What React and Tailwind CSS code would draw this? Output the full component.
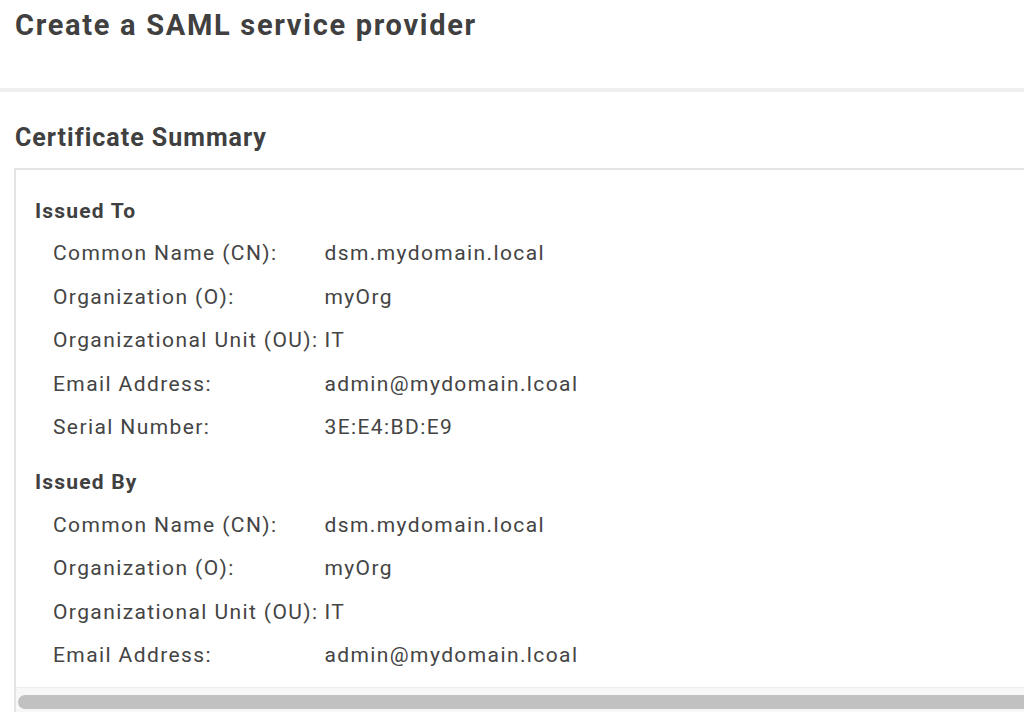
import React from 'react';

const issuedTo = [
  ['Common Name (CN):', 'dsm.mydomain.local'],
  ['Organization (O):', 'myOrg'],
  ['Organizational Unit (OU):', 'IT'],
  ['Email Address:', 'admin@mydomain.lcoal'],
  ['Serial Number:', '3E:E4:BD:E9'],
];

const issuedBy = [
  ['Common Name (CN):', 'dsm.mydomain.local'],
  ['Organization (O):', 'myOrg'],
  ['Organizational Unit (OU):', 'IT'],
  ['Email Address:', 'admin@mydomain.lcoal'],
];

const Section = ({ title, rows, className = '' }) => (
  <div className={className}>
    <div className="h-[41px] flex items-center text-[21px] font-bold tracking-[1.2px] text-[#404040]">{title}</div>
    <div className="grid grid-cols-[auto_1fr] pl-[18px] text-[21px] tracking-[1.4px] text-[#444]">
      {rows.map(([label, value]) => (
        <React.Fragment key={label + value}>
          <div className="h-[43.5px] flex items-center pr-[6px]">{label}</div>
          <div className="h-[43.5px] flex items-center">{value}</div>
        </React.Fragment>
      ))}
    </div>
  </div>
);

export default function App() {
  return (
    <div className="w-[1024px] h-[712px] overflow-hidden bg-white font-['Roboto',sans-serif]">
      <div className="h-[88px] pl-[15px] pt-[8px]">
        <h1 className="h-[36px] flex items-center text-[29px] font-bold tracking-[1.7px] text-[#404040]">
          Create a SAML service provider
        </h1>
      </div>
      <div className="h-[4px] bg-[#efefef]" />
      <div className="h-[76px] pl-[15px] flex items-center">
        <h2 className="text-[25px] font-bold tracking-[1px] text-[#404040] mt-[16px]">Certificate Summary</h2>
      </div>
      <div className="ml-[14px] w-[1060px] border-t-2 border-l-2 border-[#e3e3e3]">
        <div className="pl-[19px] pt-[21px] pb-[9px]">
          <Section title="Issued To" rows={issuedTo} />
          <Section title="Issued By" rows={issuedBy} className="mt-[13px]" />
        </div>
        <div className="h-[30px] border-t border-[#ececec] bg-[#f7f7f7] pt-[7px] pl-[2px]">
          <div className="h-[14px] w-[1040px] rounded-full bg-[#c1c1c1]" />
        </div>
      </div>
    </div>
  );
}
